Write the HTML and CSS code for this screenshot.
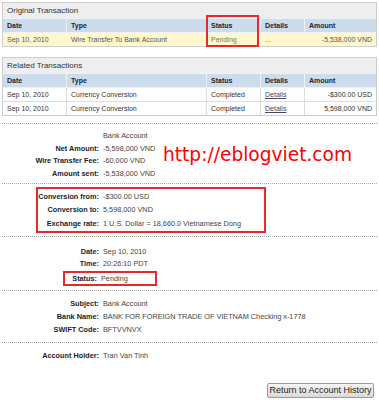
FILE: index.html
```html
<html>
<head>
    <title>Transaction Details</title>
    <link rel="stylesheet" href="styles.css">
</head>
<body>
    <div class="box">
        <h3>Original Transaction</h3>
        <table>
            <tr>
                <th class="c-date">Date</th>
                <th class="c-type">Type</th>
                <th class="c-status">Status</th>
                <th class="c-details">Details</th>
                <th class="c-amount">Amount</th>
            </tr>
            <tr class="pending">
                <td>Sep 10, 2010</td>
                <td>Wire Transfer To Bank Account</td>
                <td>Pending</td>
                <td class="muted">...</td>
                <td class="num">-5,538,000 VND</td>
            </tr>
        </table>
        <div class="mark-status"></div>
    </div>

    <div class="box related">
        <h3>Related Transactions</h3>
        <table>
            <tr>
                <th class="c-date">Date</th>
                <th class="c-type">Type</th>
                <th class="c-status">Status</th>
                <th class="c-details">Details</th>
                <th class="c-amount">Amount</th>
            </tr>
            <tr>
                <td>Sep 10, 2010</td>
                <td>Currency Conversion</td>
                <td>Completed</td>
                <td><a href="#">Details</a></td>
                <td class="num">-$300.00 USD</td>
            </tr>
            <tr>
                <td>Sep 10, 2010</td>
                <td>Currency Conversion</td>
                <td>Completed</td>
                <td><a href="#">Details</a></td>
                <td class="num">5,598,000 VND</td>
            </tr>
        </table>
    </div>

    <div class="section s-amounts">
        <div class="info">
            <span></span><span>Bank Account</span>
            <b>Net Amount:</b><span>-5,598,000 VND</span>
            <b>Wire Transfer Fee:</b><span>-60,000 VND</span>
            <b>Amount sent:</b><span>-5,538,000 VND</span>
        </div>
        <div class="watermark">http://eblogviet.com</div>
    </div>

    <div class="section s-conv">
        <div class="hl hl-conv">
            <div class="info">
                <b>Conversion from:</b><span>-$300.00 USD</span>
                <b>Conversion to:</b><span>5,598,000 VND</span>
                <b>Exchange rate:</b><span>1 U.S. Dollar = 18,660.0 Vietnamese Dong</span>
            </div>
        </div>
    </div>

    <div class="section s-date">
        <div class="info">
            <b>Date:</b><span>Sep 10, 2010</span>
            <b>Time:</b><span>20:26:10 PDT</span>
        </div>
        <div class="hl hl-status">
            <div class="info">
                <b>Status:</b><span>Pending</span>
            </div>
        </div>
    </div>

    <div class="section s-bank">
        <div class="info">
            <b>Subject:</b><span>Bank Account</span>
            <b>Bank Name:</b><span>BANK FOR FOREIGN TRADE OF VIETNAM Checking x-1778</span>
            <b>SWIFT Code:</b><span>BFTVVNVX</span>
        </div>
    </div>

    <div class="section s-holder">
        <div class="info">
            <b>Account Holder:</b><span>Tran Van Tinh</span>
        </div>
    </div>

    <div class="actions">
        <button>Return to Account History</button>
    </div>
</body>
</html>
```

FILE: styles.css
```css
body {
    margin: 0;
    font-family: "Liberation Sans", Arial, sans-serif;
    font-size: 7.3px;
    color: #444;
    background: #fff;
}
.box {
    position: relative;
    margin: 2px 2px 10px;
    border: 1px solid #ccc;
}
.box.related {
    margin-bottom: 7px;
}
.box h3 {
    margin: 0;
    height: 15px;
    padding: 0 4px;
    background: #eee;
    font-size: 8px;
    font-weight: normal;
    line-height: 15px;
    color: #333;
}
table {
    width: 100%;
    border-collapse: collapse;
    table-layout: fixed;
    font-family: "Liberation Sans", Arial, sans-serif;
    font-size: 7px;
    color: #333;
}
th, td {
    height: 13px;
    padding: 0 4px;
    text-align: left;
    line-height: 13px;
    white-space: nowrap;
    overflow: hidden;
    border: 1px solid #ddd;
}
tr:last-child td {
    border-bottom: 0;
}
th:first-child, td:first-child {
    border-left: 0;
}
th:last-child, td:last-child {
    border-right: 0;
}
th {
    background: #cddcec;
    color: #1c2430;
    border-color: #eef2f7;
}
.c-date { width: 55px; }
.c-type { width: 131px; }
.c-status { width: 45px; }
.c-details { width: 35px; }
tr.pending td {
    background: #fff8cc;
    color: #555;
    border-color: #fff8cc;
    border-left-color: #ebe3bb;
}
tr.pending td:first-child {
    border-left-color: #fff8cc;
}
tr.pending td:nth-child(3) {
    color: #80783c;
}
td.num {
    text-align: right;
}
td.muted {
    color: #bbb;
}
a {
    color: #446;
}
.mark-status {
    position: absolute;
    left: 203px;
    top: 12px;
    width: 49px;
    height: 28px;
    border: 2px solid #e8292c;
}
.section {
    position: relative;
    border-top: 1px dotted #aaa;
    margin: 0 2px;
}
.info {
    display: grid;
    grid-template-columns: 97px 1fr;
    column-gap: 4px;
    line-height: 12.5px;
}
.info b {
    text-align: right;
    color: #1c1c28;
    white-space: nowrap;
}
.info span {
    white-space: nowrap;
}
.s-amounts {
    padding: 6px 0 3px;
}
.s-conv {
    padding: 3px 0 3px;
}
.s-date {
    padding: 9px 0 4px;
}
.s-date .info {
    line-height: 12px;
}
.s-bank {
    padding: 6px 0 5px;
}
.s-bank .info {
    line-height: 13.3px;
}
.s-holder {
    padding: 6px 0 0;
}
.s-holder .info {
    line-height: 13px;
}
.hl {
    border: 2px solid #e8292c;
}
.hl-conv {
    margin-left: 34px;
    width: 226px;
    padding: 1px 0;
}
.hl-conv .info {
    grid-template-columns: 61px 1fr;
    line-height: 13.3px;
}
.hl-status {
    margin: 1px 0 0 61px;
    width: 90px;
}
.hl-status .info {
    grid-template-columns: 32px 1fr;
    line-height: 11px;
}
.watermark {
    position: absolute;
    left: 161px;
    top: 20px;
    font-family: "DejaVu Sans", sans-serif;
    font-size: 18.6px;
    color: #f00;
}
.actions {
    display: flex;
    justify-content: flex-end;
    padding: 21px 5px 0 0;
}
button {
    font-family: "Liberation Sans", Arial, sans-serif;
    font-size: 9px;
    color: #222;
    width: 107px;
    height: 15px;
    padding: 0;
    border: 1px solid #999;
    border-radius: 2px;
    background: linear-gradient(#f6f6f6, #dadada);
}
```
